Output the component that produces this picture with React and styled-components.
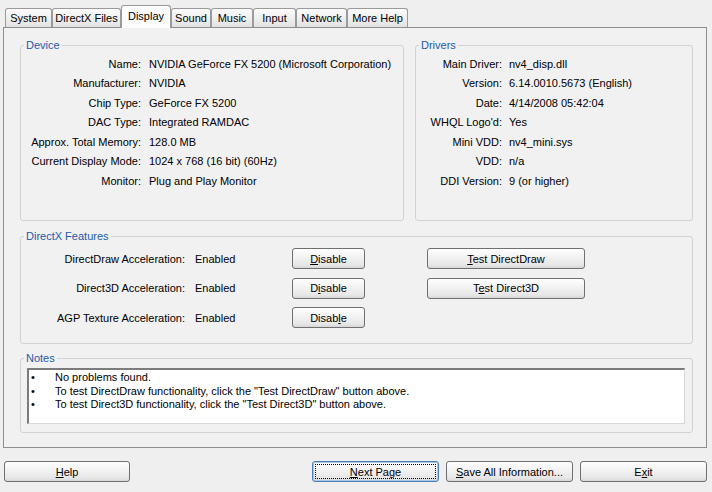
import React from 'react'
import styled, { createGlobalStyle, css } from 'styled-components'

const tabs = [
  { label: 'System', w: 47 },
  { label: 'DirectX Files', w: 69 },
  { label: 'Display', w: 50, active: true },
  { label: 'Sound', w: 40 },
  { label: 'Music', w: 42 },
  { label: 'Input', w: 43 },
  { label: 'Network', w: 51 },
  { label: 'More Help', w: 61 },
]

const device = [
  ['Name:', 'NVIDIA GeForce FX 5200  (Microsoft Corporation)'],
  ['Manufacturer:', 'NVIDIA'],
  ['Chip Type:', 'GeForce FX 5200'],
  ['DAC Type:', 'Integrated RAMDAC'],
  ['Approx. Total Memory:', '128.0 MB'],
  ['Current Display Mode:', '1024 x 768 (16 bit) (60Hz)'],
  ['Monitor:', 'Plug and Play Monitor'],
]

const drivers = [
  ['Main Driver:', 'nv4_disp.dll'],
  ['Version:', '6.14.0010.5673 (English)'],
  ['Date:', '4/14/2008 05:42:04'],
  ["WHQL Logo'd:", 'Yes'],
  ['Mini VDD:', 'nv4_mini.sys'],
  ['VDD:', 'n/a'],
  ['DDI Version:', '9 (or higher)'],
]

const notes = [
  'No problems found.',
  'To test DirectDraw functionality, click the "Test DirectDraw" button above.',
  'To test Direct3D functionality, click the "Test Direct3D" button above.',
]

export default function App() {
  return (
    <Window>
      <GlobalStyle />
      <TabStrip>
        {tabs.map(t => (
          <Tab key={t.label} $w={t.w} $active={t.active}>{t.label}</Tab>
        ))}
      </TabStrip>
      <TabPanel>
        <TopRow>
          <Group $w={384} $h={182}>
            <Caption>Device</Caption>
            <InfoGrid $label={120} $gap={8}>
              {device.map(([k, v]) => (
                <React.Fragment key={k}>
                  <Key>{k}</Key>
                  <span>{v}</span>
                </React.Fragment>
              ))}
            </InfoGrid>
          </Group>
          <Group $h={182} $grow>
            <Caption>Drivers</Caption>
            <InfoGrid $label={86} $gap={7}>
              {drivers.map(([k, v]) => (
                <React.Fragment key={k}>
                  <Key>{k}</Key>
                  <span>{v}</span>
                </React.Fragment>
              ))}
            </InfoGrid>
          </Group>
        </TopRow>

        <Group $h={115}>
          <Caption>DirectX Features</Caption>
          <FeatureGrid>
            <Key>DirectDraw Acceleration:</Key>
            <Status>Enabled</Status>
            <Button $w={73}><u>D</u>isable</Button>
            <TestButton $w={158}><u>T</u>est DirectDraw</TestButton>

            <Key>Direct3D Acceleration:</Key>
            <Status>Enabled</Status>
            <Button $w={73}>D<u>i</u>sable</Button>
            <TestButton $w={158}>T<u>e</u>st Direct3D</TestButton>

            <Key>AGP Texture Acceleration:</Key>
            <Status>Enabled</Status>
            <Button $w={73}>Disab<u>l</u>e</Button>
          </FeatureGrid>
        </Group>

        <Group $h={81}>
          <Caption>Notes</Caption>
          <NotesBox>
            {notes.map(n => (
              <React.Fragment key={n}>
                <Bullet>•</Bullet>
                <span>{n}</span>
              </React.Fragment>
            ))}
          </NotesBox>
        </Group>
      </TabPanel>

      <ButtonBar>
        <Button $w={126}><u>H</u>elp</Button>
        <ButtonGroup>
          <Button $w={127} $focused><u>N</u>ext Page</Button>
          <Button $w={127}><u>S</u>ave All Information...</Button>
          <Button $w={127}>E<u>x</u>it</Button>
        </ButtonGroup>
      </ButtonBar>
    </Window>
  )
}

const GlobalStyle = createGlobalStyle`
  html, body {
    margin: 0;
    padding: 0;
  }
  body {
    background: #efefef;
    font-family: "Liberation Sans", Arial, sans-serif;
    font-size: 11px;
    color: #000;
  }
  * {
    box-sizing: border-box;
  }
`

const Window = styled.div`
  width: 712px;
  height: 492px;
  overflow: hidden;
  display: flex;
  flex-direction: column;
  background: #efefef;
  padding-top: 5px;
`

const TabStrip = styled.div`
  display: flex;
  align-items: flex-end;
  height: 22px;
  padding-left: 5px;
  position: relative;
  z-index: 1;
`

const Tab = styled.div`
  width: ${p => p.$w}px;
  height: 19px;
  display: flex;
  align-items: center;
  justify-content: center;
  border: 1px solid #9a9a9a;
  border-bottom: none;
  border-radius: 3px 3px 0 0;
  background: linear-gradient(#fbfbfb, #ededed 60%, #e2e2e2);
  white-space: nowrap;
  ${p => p.$active && css`
    height: 23px;
    margin-bottom: -1px;
    background: #fcfcfc;
    padding-bottom: 3px;
  `}
`

const TabPanel = styled.div`
  margin: 0 5px 0 3px;
  height: 421px;
  border: 1px solid #8e8e8e;
  background: #f1f1f1;
  padding: 11px 13px 14px 16px;
  display: flex;
  flex-direction: column;
  gap: 8px;
`

const TopRow = styled.div`
  display: flex;
  gap: 11px;
  margin-bottom: 1px;
`

const Group = styled.fieldset`
  margin: 0;
  padding: 0;
  min-width: 0;
  height: ${p => p.$h}px;
  ${p => p.$w && css`width: ${p.$w}px;`}
  ${p => p.$grow && css`flex: 1;`}
  border: 1px solid #d2d2d2;
  border-radius: 3px;
`

const Caption = styled.legend`
  margin-left: 3px;
  padding: 0 2px;
  line-height: 13px;
  color: #1e5aa8;
`

const InfoGrid = styled.div`
  display: grid;
  grid-template-columns: ${p => p.$label}px auto;
  column-gap: ${p => p.$gap}px;
  grid-auto-rows: 19.5px;
  align-items: center;
  padding-top: 2px;
  white-space: nowrap;
`

const Key = styled.span`
  text-align: right;
  white-space: nowrap;
`

const FeatureGrid = styled.div`
  display: grid;
  grid-template-columns: 164px 107px 73px 158px;
  grid-template-rows: repeat(3, 21px);
  row-gap: 8.5px;
  align-items: center;
  padding-top: 5px;
`

const Status = styled.span`
  padding-left: 10px;
`

const Button = styled.button`
  width: ${p => p.$w}px;
  height: 21px;
  padding: 0;
  font: inherit;
  color: #000;
  border: 1px solid #707070;
  border-radius: 3px;
  background: linear-gradient(#fefefe, #f2f2f2 45%, #e6e6e6 85%, #d6d6d6);
  white-space: nowrap;
  ${p => p.$focused && css`
    border-color: #4a7fb8;
    box-shadow: inset 0 0 0 1px #a9c6e8;
    outline: 1px dotted #000;
    outline-offset: -4px;
  `}
`

const TestButton = styled(Button)`
  margin-left: 62px;
`

const NotesBox = styled.div`
  margin: 3px 7px 0 6px;
  height: 56px;
  background: #fff;
  border-style: solid;
  border-width: 2px 1px 1px 2px;
  border-color: #7c7c7c #d8d8d8 #d8d8d8 #7c7c7c;
  padding: 0 0 0 1px;
  display: grid;
  grid-template-columns: 25px auto;
  grid-auto-rows: 13.5px;
  align-items: center;
  align-content: start;
  white-space: nowrap;
`

const Bullet = styled.span`
  padding-left: 1px;
`

const ButtonBar = styled.div`
  display: flex;
  justify-content: space-between;
  margin-top: 13px;
  padding: 0 5px 0 4px;
`

const ButtonGroup = styled.div`
  display: flex;
  gap: 7px;
`
